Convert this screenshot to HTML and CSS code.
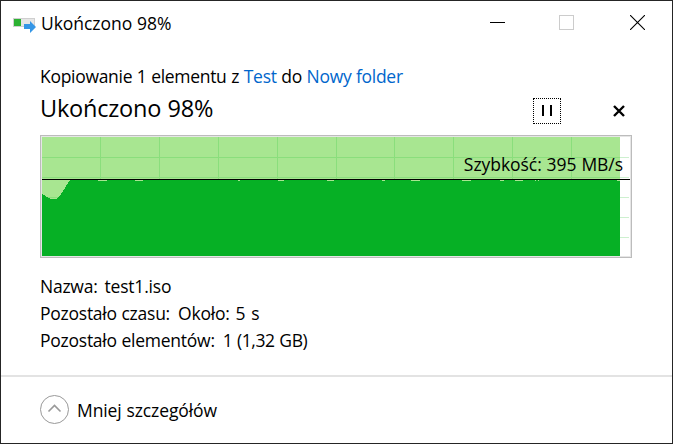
FILE: index.html
```html
<!DOCTYPE html>
<html lang="pl">
<head>
    <meta charset="UTF-8">
    <meta name="viewport" content="width=device-width, initial-scale=1.0">
    <link rel="stylesheet" href="styles.css">
    <title>Ukończono 98%</title>
</head>
<body>
  <div class="window">
    <div class="title-bar">
      <svg class="app-icon" width="24" height="16" viewBox="0 0 24 16">
        <rect x="0.5" y="0.5" width="21" height="8" fill="#e6e6e6" stroke="#cfcfcf"/>
        <rect x="1" y="1" width="7" height="7" fill="#2db233"/>
        <path d="M11 6h6V3l6 6-6 6v-4h-6z" fill="#3596e6"/>
      </svg>
      <span class="title-text">Ukończono 98%</span>
      <div class="window-buttons">
        <svg width="15" height="15" viewBox="0 0 15 15"><path d="M0 7.5h15" stroke="#000"/></svg>
        <svg width="15" height="15" viewBox="0 0 15 15"><rect x="0.5" y="0.5" width="14" height="14" fill="none" stroke="#ccc"/></svg>
        <svg class="close" width="15" height="15" viewBox="0 0 15 15"><path d="M0 0l15 15M15 0L0 15" stroke="#000" stroke-width="1.1"/></svg>
      </div>
    </div>

    <div class="content">
      <div class="copy-line">Kopiowanie 1 elementu z <a class="link">Test</a> do <a class="link">Nowy folder</a></div>
      <div class="status-row">
        <div class="status-text">Ukończono 98%</div>
        <div class="actions">
          <div class="pause">
            <svg width="10" height="11" viewBox="0 0 10 11"><path d="M1 0v11M9 0v11" stroke="#000" stroke-width="2"/></svg>
          </div>
          <svg width="12" height="12" viewBox="0 0 12 12"><path d="M1 1l10 10M11 1L1 11" stroke="#000" stroke-width="2.4"/></svg>
        </div>
      </div>

      <div class="graph">
        <svg class="graph-svg" width="588" height="119" viewBox="0 0 588 119" shape-rendering="crispEdges">
          <path d="M578 20.5h9M578 40.5h9M578 60.5h9M578 80.5h9M578 100.5h9" stroke="#cdf0cf"/>
          <rect width="578" height="119" fill="#a8e691"/>
          <!-- grid -->
          <path d="M0 20.5h578M0 40.5h578M0 60.5h578M58.5 0v43M117.5 0v43M176.5 0v43M235.5 0v43M294.5 0v43M352.5 0v43M411.5 0v43M470.5 0v43M529.5 0v43" stroke="#8ade7c"/>
          <!-- transfer speed -->
          <path d="M0 57l2 1 3 2 3 1.5h7l3-3 4-6 3-5 3-4.5H578V119H0z" fill="#06b025"/>
          <path d="M56 43.5h9M93 43.5h8M196 43.5h2M236 43.5h6M285 43.5h7M340 43.5h3M369 43.5h9M420 43.5h9M458 43.5h4M473 43.5h8M493 43.5h1M496 43.5h1M575 43.5h3" stroke="#a8e691"/>
          <path d="M0 42.5h588" stroke="#000"/>
        </svg>
        <div class="speed">Szybkość: 395 MB/s</div>
      </div>

      <div class="details">
        <div class="detail"><span class="name">Nazwa:</span><span class="value file">test1.iso</span></div>
        <div class="detail"><span class="name">Pozostało czasu:</span><span class="value">Około: 5 s</span></div>
        <div class="detail"><span class="name">Pozostało elementów:</span><span class="value count">1 (1,32 GB)</span></div>
      </div>
    </div>

    <div class="footer">
      <svg width="30" height="30" viewBox="0 0 30 30" fill="none">
        <circle cx="14.5" cy="14.5" r="14" stroke="#999"/>
        <path d="M8.5 16.5l6-6 6 6" stroke="#999" stroke-width="1.6"/>
      </svg>
      <span class="less">Mniej szczegółów</span>
    </div>
  </div>
</body>
</html>
```
FILE: styles.css
```css
* {
    box-sizing: border-box;
}

body {
    margin: 0;
    background-color: #fff;
    color: #000;
    font-family: "Open Sans", "Noto Sans", sans-serif;
    font-size: 17.5px;
    letter-spacing: -0.3px;
    word-spacing: 0.4px;
    white-space: nowrap;
}

svg {
    display: block;
    flex: none;
}

.window {
    display: flex;
    flex-direction: column;
    width: 673px;
    height: 444px;
    border: 1px solid #252525;
}

.title-bar {
    display: flex;
    align-items: center;
    height: 43px;
    padding: 0 27px 0 12px;
}

.app-icon {
    margin-top: 7px;
    margin-right: 4px;
}

.title-text {
    padding-top: 1px;
    letter-spacing: -0.05px;
}

.window-buttons {
    display: flex;
    gap: 54px;
    margin-left: auto;
}

.close {
    margin-left: 2px;
}

.content {
    padding: 19px 40px 0 39px;
}

.copy-line {
    height: 27px;
    line-height: 26px;
}

.link {
    color: #0066cc;
}

.status-row {
    display: flex;
    justify-content: space-between;
    height: 45px;
}

.status-text {
    font-size: 23.5px;
    line-height: 36px;
    letter-spacing: -0.2px;
}

.actions {
    display: flex;
    align-items: center;
    gap: 52px;
    height: 26px;
    margin-top: 8px;
    padding-right: 7px;
}

.pause {
    display: flex;
    justify-content: center;
    width: 28px;
    height: 26px;
    padding-top: 6px;
    border: 1px dotted #000;
}

.graph {
    position: relative;
    height: 123px;
    border: 1px solid #bcbcbc;
    padding: 1px;
    background-color: #e6e6e6;
}

.graph-svg {
    background-color: #fff;
}

.speed {
    position: absolute;
    right: 8px;
    top: 15px;
    line-height: 26px;
    letter-spacing: -0.05px;
}

.details {
    padding-top: 15px;
}

.detail {
    display: flex;
    gap: 8px;
    height: 27px;
    line-height: 27px;
}

.name {
    letter-spacing: -0.25px;
}

.value {
    letter-spacing: -0.2px;
    word-spacing: 1.5px;
}

.file {
    margin-left: -1px;
}

.count {
    letter-spacing: -0.4px;
    word-spacing: 0.5px;
}

.footer {
    display: flex;
    align-items: center;
    gap: 7px;
    height: 68px;
    margin-top: auto;
    padding-left: 39px;
    border-top: 2px solid #e3e3e3;
}

.less {
    letter-spacing: -0.1px;
}
```
